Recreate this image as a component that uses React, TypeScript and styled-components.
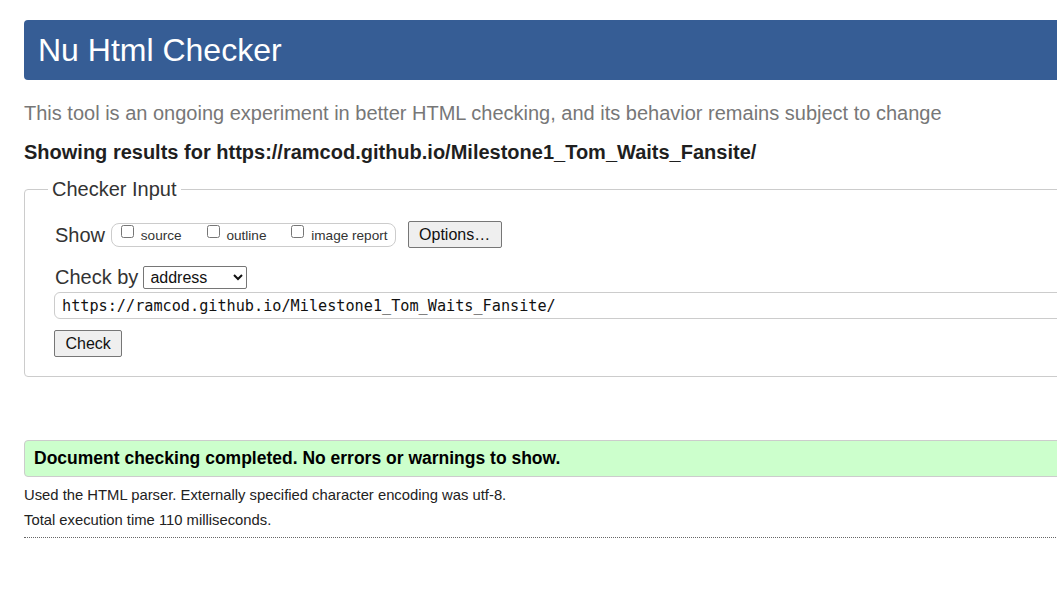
import React from 'react';
import styled, { createGlobalStyle } from 'styled-components';

const GlobalStyle = createGlobalStyle`
  html, body {
    margin: 0;
    padding: 0;
    overflow: hidden;
    background: #fff;
  }
  body {
    font-family: 'Liberation Sans', Arial, sans-serif;
    color: #222;
  }
`;

const Page = styled.main`
  width: 1120px;
  padding: 20px 0 0 24px;
`;

// --------------- header ---------------
const Header = styled.header`
  height: 60px;
  padding-left: 14px;
  background: #365d95;
  border-radius: 4px;
  display: flex;
  align-items: center;

  h1 {
    margin: 0;
    font-size: 32px;
    font-weight: 400;
    color: #fff;
    line-height: 1;
  }
`;

const Intro = styled.p`
  margin: 21px 0 0;
  font-size: 20px;
  line-height: 24px;
  color: #777;
`;

const ResultsFor = styled.p`
  margin: 15px 0 0;
  font-size: 20px;
  line-height: 24px;
  font-weight: 700;
  color: #1f1f1f;
`;

// --------------- <CheckerInput /> ---------------
const Fieldset = styled.fieldset`
  margin: 13px 0 0;
  padding: 0 30px 19px;
  border: 1px solid #ccc;
  border-radius: 4px;
  min-width: 0;

  legend {
    margin-left: -7px;
    padding: 0 4px;
    font-size: 20px;
    line-height: 24px;
    color: #333;
  }
`;

const Row = styled.div<{ $top: number }>`
  display: flex;
  align-items: center;
  margin-top: ${(p) => p.$top}px;
  font-size: 20px;
  color: #333;
`;

const Caption = styled.span`
  line-height: 24px;
`;

const ShowGroup = styled.span`
  margin-left: 6px;
  height: 24px;
  box-sizing: border-box;
  display: flex;
  align-items: center;
  padding: 0 7px 0 5px;
  border: 1px solid #ccc;
  border-radius: 8px;
`;

const Toggle = styled.label`
  font-size: 13.6px;
  color: #333;
  line-height: 18px;
  margin-right: 21px;

  &:last-child {
    margin-right: 0;
  }

  input {
    margin: 0 3px 0 4px;
    width: 13px;
    height: 13px;
    vertical-align: 2px;
  }
`;

const Button = styled.button<{ $left?: number }>`
  margin-left: ${(p) => p.$left ?? 0}px;
  font-family: 'Liberation Sans', Arial, sans-serif;
  font-size: 16px;
  color: #111;
  background: #efefef;
  border: 1px solid #767676;
  border-radius: 2px;
  padding: 0 10.5px;
  height: 27px;
`;

const Select = styled.select`
  margin-left: 5px;
  width: 104px;
  height: 23px;
  font-family: 'Liberation Sans', Arial, sans-serif;
  font-size: 16px;
  color: #111;
  border: 1px solid #767676;
  border-radius: 2px;
  background: #fff;
  padding: 0 2px;
`;

const UrlInput = styled.input`
  display: block;
  box-sizing: border-box;
  width: 100%;
  height: 27px;
  margin: 3px 0 0 -1px;
  padding: 0 7px;
  font-family: 'DejaVu Sans Mono', 'Liberation Mono', monospace;
  font-size: 15.2px;
  color: #111;
  border: 1px solid #ccc;
  border-radius: 6px;
  outline: none;
`;

const SubmitRow = styled.div`
  margin: 11px 0 0 -1px;
`;

// --------------- results ---------------
const Success = styled.div`
  margin-top: 63px;
  height: 37px;
  box-sizing: border-box;
  display: flex;
  align-items: center;
  padding-left: 9px;
  background: #ccffcc;
  border: 1px solid #ccc;
  border-radius: 4px;
  font-size: 17.5px;
  font-weight: 700;
  color: #000;
`;

const Details = styled.p<{ $top: number }>`
  margin: ${(p) => p.$top}px 0 0;
  font-size: 14.8px;
  line-height: 20px;
  color: #222;
`;

const Dotted = styled.hr`
  margin: 7px 0 0;
  border: 0;
  border-top: 1px dotted #666;
  height: 0;
`;

export default function App() {
  const url = 'https://ramcod.github.io/Milestone1_Tom_Waits_Fansite/';
  return (
    <>
      <GlobalStyle />
      <Page>
        <Header>
          <h1>Nu Html Checker</h1>
        </Header>
        <Intro>
          This tool is an ongoing experiment in better HTML checking, and its behavior remains subject to change
        </Intro>
        <ResultsFor>Showing results for {url}</ResultsFor>

        <Fieldset>
          <legend>Checker Input</legend>
          <Row $top={20}>
            <Caption>Show</Caption>
            <ShowGroup>
              <Toggle>
                <input type="checkbox" /> source
              </Toggle>
              <Toggle>
                <input type="checkbox" /> outline
              </Toggle>
              <Toggle>
                <input type="checkbox" /> image report
              </Toggle>
            </ShowGroup>
            <Button $left={12}>Options…</Button>
          </Row>
          <Row $top={17}>
            <Caption>Check by</Caption>
            <Select defaultValue="address">
              <option value="address">address</option>
              <option value="file">file upload</option>
              <option value="text">text input</option>
            </Select>
          </Row>
          <UrlInput type="url" defaultValue={url} />
          <SubmitRow>
            <Button>Check</Button>
          </SubmitRow>
        </Fieldset>

        <Success>Document checking completed. No errors or warnings to show.</Success>
        <Details $top={8}>Used the HTML parser. Externally specified character encoding was utf-8.</Details>
        <Details $top={5}>Total execution time 110 milliseconds.</Details>
        <Dotted />
      </Page>
    </>
  );
}
